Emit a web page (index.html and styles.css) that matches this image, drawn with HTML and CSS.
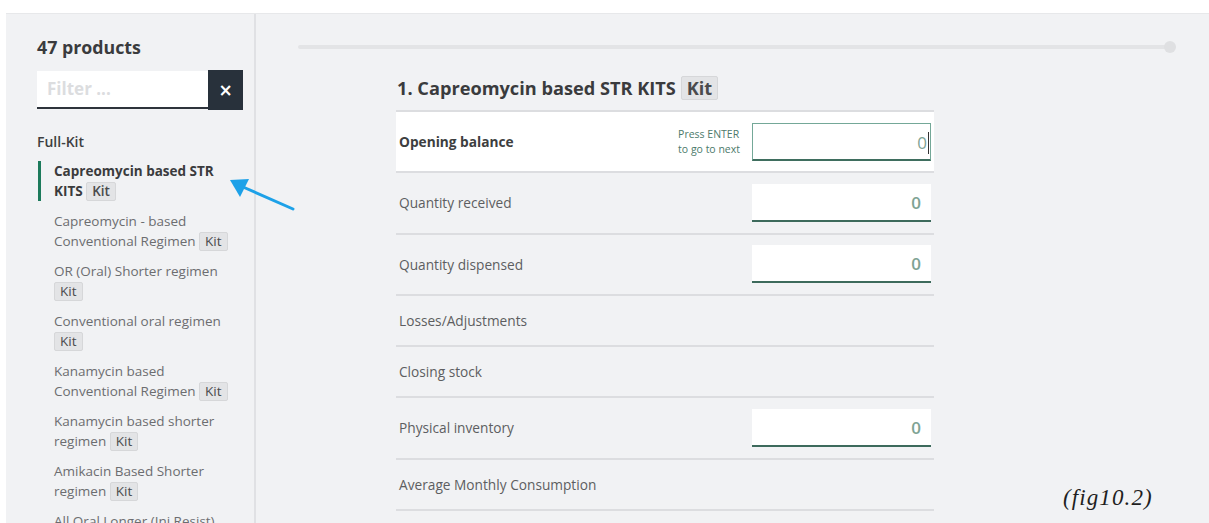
FILE: index.html
```html
<!DOCTYPE html>
<html lang="en">
<head>
<meta charset="utf-8">
<title>Stock entry</title>
<link rel="stylesheet" href="styles.css">
</head>
<body>
<div class="frame">
  <div class="app">
    <aside class="sidebar">
      <h2 class="count">47 products</h2>
      <div class="filter">
        <div class="filter-input">Filter ...</div>
        <button class="filter-clear" type="button">&#215;</button>
      </div>
      <div class="group-title">Full-Kit</div>
      <ul class="product-list">
        <li class="product active">Capreomycin based STR KITS <span class="tag">Kit</span></li>
        <li class="product">Capreomycin - based Conventional Regimen <span class="tag">Kit</span></li>
        <li class="product">OR (Oral) Shorter regimen <span class="tag">Kit</span></li>
        <li class="product">Conventional oral regimen <span class="tag">Kit</span></li>
        <li class="product">Kanamycin based Conventional Regimen <span class="tag">Kit</span></li>
        <li class="product">Kanamycin based shorter regimen <span class="tag">Kit</span></li>
        <li class="product">Amikacin Based Shorter regimen <span class="tag">Kit</span></li>
        <li class="product">All Oral Longer (Inj Resist) <span class="tag">Kit</span></li>
      </ul>
    </aside>
    <main class="main">
      <div class="progress"><span class="progress-dot"></span></div>
      <section class="entry">
        <h1 class="entry-title">1. Capreomycin based STR KITS <span class="tag tag-lg">Kit</span></h1>
        <div class="rows">
          <div class="row row-focus">
            <span class="label label-strong">Opening balance</span>
            <span class="hint">Press ENTER<br>to go to next</span>
            <div class="field field-focus">0<span class="caret"></span></div>
          </div>
          <div class="row">
            <span class="label">Quantity received</span>
            <div class="field">0</div>
          </div>
          <div class="row">
            <span class="label">Quantity dispensed</span>
            <div class="field">0</div>
          </div>
          <div class="row row-plain">
            <span class="label">Losses/Adjustments</span>
          </div>
          <div class="row row-plain">
            <span class="label">Closing stock</span>
          </div>
          <div class="row">
            <span class="label">Physical inventory</span>
            <div class="field">0</div>
          </div>
          <div class="row row-plain">
            <span class="label">Average Monthly Consumption</span>
          </div>
        </div>
      </section>
    </main>
  </div>
  <svg class="pointer" width="80" height="40" viewBox="0 0 80 40">
    <line x1="64" y1="31" x2="14" y2="9" stroke="#1da1e8" stroke-width="3" stroke-linecap="round"/>
    <polygon points="1,2 20,1 11,19" fill="#1da1e8"/>
  </svg>
  <div class="caption">(fig10.2)</div>
</div>
</body>
</html>
```

FILE: styles.css
```css
* { box-sizing: border-box; }

html, body {
  margin: 0;
  padding: 0;
  height: 523px;
  overflow: hidden;
  background: #ffffff;
}

body {
  font-family: "Open Sans", "Noto Sans", sans-serif;
  color: #3a3b3d;
}

.frame {
  position: relative;
  height: 523px;
  padding: 13px 0 0 6px;
}

.app {
  display: flex;
  height: 100%;
  background: #f1f2f4;
  border-top: 1px solid #e7e8ea;
}

/* ---------- sidebar ---------- */
.sidebar {
  width: 250px;
  flex: none;
  padding: 23px 11px 0 31px;
  border-right: 2px solid #e0e1e4;
  overflow: hidden;
}

.count {
  margin: 0;
  font-size: 17.8px;
  line-height: 20px;
  font-weight: 700;
  color: #3a3b3d;
}

.filter {
  display: flex;
  margin-top: 13px;
  height: 40px;
}

.filter-input {
  flex: 1;
  height: 38px;
  margin-top: 1px;
  background: #fff;
  border-bottom: 2px solid #2d333b;
  padding: 0 10px;
  font-size: 17px;
  font-weight: 700;
  line-height: 36px;
  color: #dcdddf;
}

.filter-clear {
  width: 35px;
  height: 40px;
  border: 0;
  padding: 0;
  background: #28313b;
  color: #fff;
  font-family: "DejaVu Sans", sans-serif;
  font-size: 17px;
  font-weight: 700;
  line-height: 40px;
}

.group-title {
  margin-top: 22px;
  font-size: 14px;
  line-height: 20px;
  font-weight: 600;
  color: #3e3f41;
}

.product-list {
  list-style: none;
  margin: 9px 0 0;
  padding: 0;
}

.product {
  margin: 0 0 10px 1px;
  padding-left: 13px;
  border-left: 3px solid transparent;
  font-size: 13.5px;
  line-height: 20px;
  color: #6c6d70;
}

.product.active {
  border-left-color: #1c7a5b;
  font-weight: 700;
  color: #3a3b3d;
}

.tag {
  display: inline-block;
  padding: 0 5px;
  line-height: 17px;
  background: #e3e4e6;
  border: 1px solid #d6d7d9;
  border-radius: 2px;
  color: #4a4b4d;
  font-weight: 400;
}

.product.active .tag {
  font-weight: 600;
}

/* ---------- main panel ---------- */
.main {
  flex: 1;
  position: relative;
  padding: 31px 38px 0 42px;
}

.progress {
  position: relative;
  height: 4px;
  border-radius: 2px;
  background: #e3e4e6;
  margin-right: 1px;
}

.progress-dot {
  position: absolute;
  right: -6px;
  top: -4px;
  width: 12px;
  height: 12px;
  border-radius: 50%;
  background: #dfe0e2;
}

.entry {
  width: 538px;
  margin: 27px 0 0 98px;
}

.entry-title {
  margin: 0 0 10px 1px;
  font-size: 18.2px;
  line-height: 24px;
  font-weight: 700;
  color: #3a3b3d;
}

.tag-lg {
  padding: 0 5px;
  line-height: 22px;
  font-weight: 700;
}

.rows {
  border-top: 2px solid #dcdde0;
}

.row {
  display: flex;
  align-items: center;
  height: 61.5px;
  padding: 0 3px;
  border-bottom: 2px solid #dcdde0;
}

.row-plain {
  height: 51px;
}

.row-focus {
  background: #ffffff;
  height: 61px;
}

.label {
  flex: 1;
  font-size: 13.7px;
  color: #5d5e61;
}

.label-strong {
  font-weight: 700;
  color: #3d3e40;
}

.hint {
  margin-right: 12px;
  font-size: 10.5px;
  line-height: 15px;
  color: #4c7a6b;
}

.field {
  width: 179px;
  height: 38px;
  background: #ffffff;
  border-bottom: 2px solid #3d6a5c;
  padding-right: 10px;
  text-align: right;
  font-size: 17px;
  font-weight: 600;
  line-height: 37px;
  color: #7ea394;
}

.field-focus {
  border: 1px solid #74a898;
  border-bottom: 2px solid #3f6e5f;
  padding-right: 1px;
  font-weight: 400;
}

.caret {
  display: inline-block;
  width: 1px;
  height: 22px;
  margin-left: 1px;
  vertical-align: -5px;
  background: #333;
}

/* ---------- annotation overlay ---------- */
.pointer {
  position: absolute;
  left: 229px;
  top: 178px;
}

.caption {
  position: absolute;
  left: 1063px;
  top: 484px;
  font-family: "Liberation Serif", serif;
  font-style: italic;
  font-size: 23px;
  line-height: 28px;
  letter-spacing: 1.1px;
  color: #1f1f1f;
}
```
